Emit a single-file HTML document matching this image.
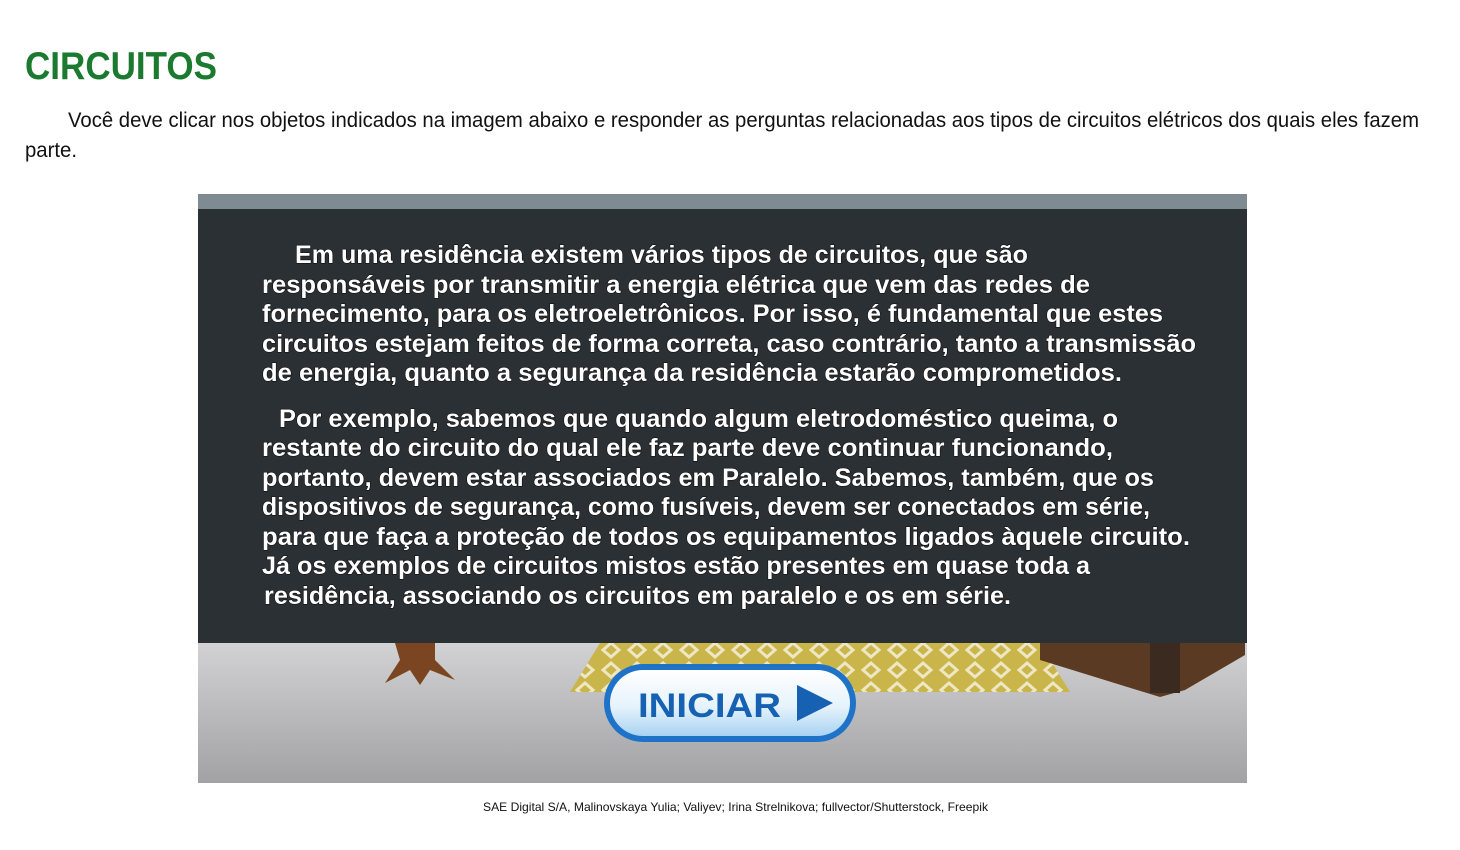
<!DOCTYPE html>
<html><head><meta charset="utf-8"><style>
html,body{margin:0;padding:0;background:#fff;}
svg{display:block}
</style></head><body>
<svg width="1460" height="850" viewBox="0 0 1460 850" xmlns="http://www.w3.org/2000/svg">
<defs>
<linearGradient id="floor" gradientUnits="userSpaceOnUse" x1="0" y1="643" x2="0" y2="783">
<stop offset="0" stop-color="#d2d2d4"/><stop offset="1" stop-color="#a2a2a4"/>
</linearGradient>
<linearGradient id="btn" x1="0" y1="0" x2="0" y2="1">
<stop offset="0" stop-color="#ffffff"/><stop offset="0.55" stop-color="#e6f3fc"/><stop offset="1" stop-color="#a9d3f2"/>
</linearGradient>
<pattern id="rug" width="26" height="20" patternUnits="userSpaceOnUse">
<rect width="26" height="20" fill="#c9b54a"/>
<path d="M13 3 L21 10 L13 17 L5 10 Z" fill="none" stroke="#eee7c4" stroke-width="3"/>
</pattern>
</defs>
<rect width="1460" height="850" fill="#fff"/>
<text x="25" y="79" font-family="Liberation Sans, sans-serif" font-weight="bold" font-size="39" fill="#1b7a2f" textLength="192" lengthAdjust="spacingAndGlyphs">CIRCUITOS</text>
<g font-family="Liberation Sans, sans-serif" font-size="21" fill="#111">
<text x="68" y="127" textLength="1351" lengthAdjust="spacingAndGlyphs">Você deve clicar nos objetos indicados na imagem abaixo e responder as perguntas relacionadas aos tipos de circuitos elétricos dos quais eles fazem</text>
<text x="25" y="157" textLength="52" lengthAdjust="spacingAndGlyphs">parte.</text>
</g>
<rect x="198" y="194" width="1049" height="589" fill="url(#floor)"/>
<rect x="198" y="194" width="1049" height="16" fill="#7f8b93"/>
<rect x="198" y="209" width="1049" height="434" fill="#2b3034"/>
<path d="M570 692 L600 643 L1040 643 L1070 692 Z" fill="url(#rug)"/>
<path d="M395 643 L400 660 L385 683 L410 670 L420 685 L430 670 L455 680 L435 660 L435 643 Z" fill="#7a4520"/>
<path d="M1040 643 L1040 660 L1160 697 L1185 690 L1245 655 L1245 643 Z" fill="#5a3a22"/>
<rect x="1150" y="643" width="30" height="50" fill="#3a2a20"/>
<rect x="604" y="664" width="252" height="78" rx="39" fill="#1e73c8"/>
<rect x="610" y="670" width="240" height="66" rx="33" fill="url(#btn)"/>
<text x="638" y="717" font-family="Liberation Sans, sans-serif" font-weight="bold" font-size="34" fill="#1761b2" textLength="143" lengthAdjust="spacingAndGlyphs">INICIAR</text>
<path d="M797 685 L833 703 L797 721 Z" fill="#1761b2"/>
<g font-family="Liberation Sans, sans-serif" font-weight="bold" font-size="25" fill="#fff" stroke="#111" stroke-width="1.2" paint-order="stroke">
<text x="295" y="263" textLength="733" lengthAdjust="spacingAndGlyphs">Em uma residência existem vários tipos de circuitos, que são</text>
<text x="262" y="293" textLength="828" lengthAdjust="spacingAndGlyphs">responsáveis por transmitir a energia elétrica que vem das redes de</text>
<text x="262" y="322" textLength="901" lengthAdjust="spacingAndGlyphs">fornecimento, para os eletroeletrônicos. Por isso, é fundamental que estes</text>
<text x="262" y="352" textLength="934" lengthAdjust="spacingAndGlyphs">circuitos estejam feitos de forma correta, caso contrário, tanto a transmissão</text>
<text x="262" y="381" textLength="860" lengthAdjust="spacingAndGlyphs">de energia, quanto a segurança da residência estarão comprometidos.</text>
<text x="279" y="427" textLength="839" lengthAdjust="spacingAndGlyphs">Por exemplo, sabemos que quando algum eletrodoméstico queima, o</text>
<text x="262" y="456" textLength="851" lengthAdjust="spacingAndGlyphs">restante do circuito do qual ele faz parte deve continuar funcionando,</text>
<text x="262" y="486" textLength="892" lengthAdjust="spacingAndGlyphs">portanto, devem estar associados em Paralelo. Sabemos, também, que os</text>
<text x="262" y="515" textLength="888" lengthAdjust="spacingAndGlyphs">dispositivos de segurança, como fusíveis, devem ser conectados em série,</text>
<text x="262" y="545" textLength="928" lengthAdjust="spacingAndGlyphs">para que faça a proteção de todos os equipamentos ligados àquele circuito.</text>
<text x="262" y="574" textLength="828" lengthAdjust="spacingAndGlyphs">Já os exemplos de circuitos mistos estão presentes em quase toda a</text>
<text x="264" y="604" textLength="747" lengthAdjust="spacingAndGlyphs">residência, associando os circuitos em paralelo e os em série.</text>
</g>
<text x="483" y="811" font-family="Liberation Sans, sans-serif" font-size="12" fill="#111" textLength="505" lengthAdjust="spacingAndGlyphs">SAE Digital S/A, Malinovskaya Yulia; Valiyev; Irina Strelnikova; fullvector/Shutterstock, Freepik</text>
</svg>
</body></html>
